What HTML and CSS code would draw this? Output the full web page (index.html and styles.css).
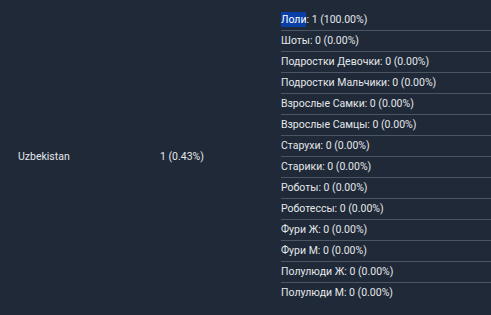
FILE: index.html
```html
<!DOCTYPE html>
<html lang="ru">
<head>
<meta charset="utf-8">
<link rel="stylesheet" href="styles.css">
</head>
<body>
<div class="row">
  <div class="cell country">Uzbekistan</div>
  <div class="cell count">1 (0.43%)</div>
  <ul class="cell breakdown">
    <li><span class="sel">Лоли</span>: 1 (100.00%)</li>
    <li>Шоты: 0 (0.00%)</li>
    <li>Подростки Девочки: 0 (0.00%)</li>
    <li>Подростки Мальчики: 0 (0.00%)</li>
    <li>Взрослые Самки: 0 (0.00%)</li>
    <li>Взрослые Самцы: 0 (0.00%)</li>
    <li>Старухи: 0 (0.00%)</li>
    <li>Старики: 0 (0.00%)</li>
    <li>Роботы: 0 (0.00%)</li>
    <li>Роботессы: 0 (0.00%)</li>
    <li>Фури Ж: 0 (0.00%)</li>
    <li>Фури М: 0 (0.00%)</li>
    <li>Полулюди Ж: 0 (0.00%)</li>
    <li>Полулюди М: 0 (0.00%)</li>
  </ul>
</div>
</body>
</html>
```
FILE: styles.css
```css
html, body {
  margin: 0;
  padding: 0;
  background: #1f2937;
  height: 100%;
}
body {
  font-family: Roboto, "Noto Sans", sans-serif;
  font-size: 10.5px;
  color: #e5e7eb;
}
.row {
  display: grid;
  grid-template-columns: 160px 121px 1fr;
  align-items: center;
  padding: 10px 0 12px 0;
}
.country {
  padding-left: 18px;
}
.breakdown {
  list-style: none;
  margin: 0;
  padding: 0;
}
.breakdown li {
  height: 20px;
  line-height: 20px;
  border-bottom: 1px solid #4b5563;
}
.breakdown li:last-child {
  border-bottom: none;
}
.sel {
  background: #0b3fa8;
  color: #ffffff;
  display: inline-block;
  line-height: 15px;
}
```
